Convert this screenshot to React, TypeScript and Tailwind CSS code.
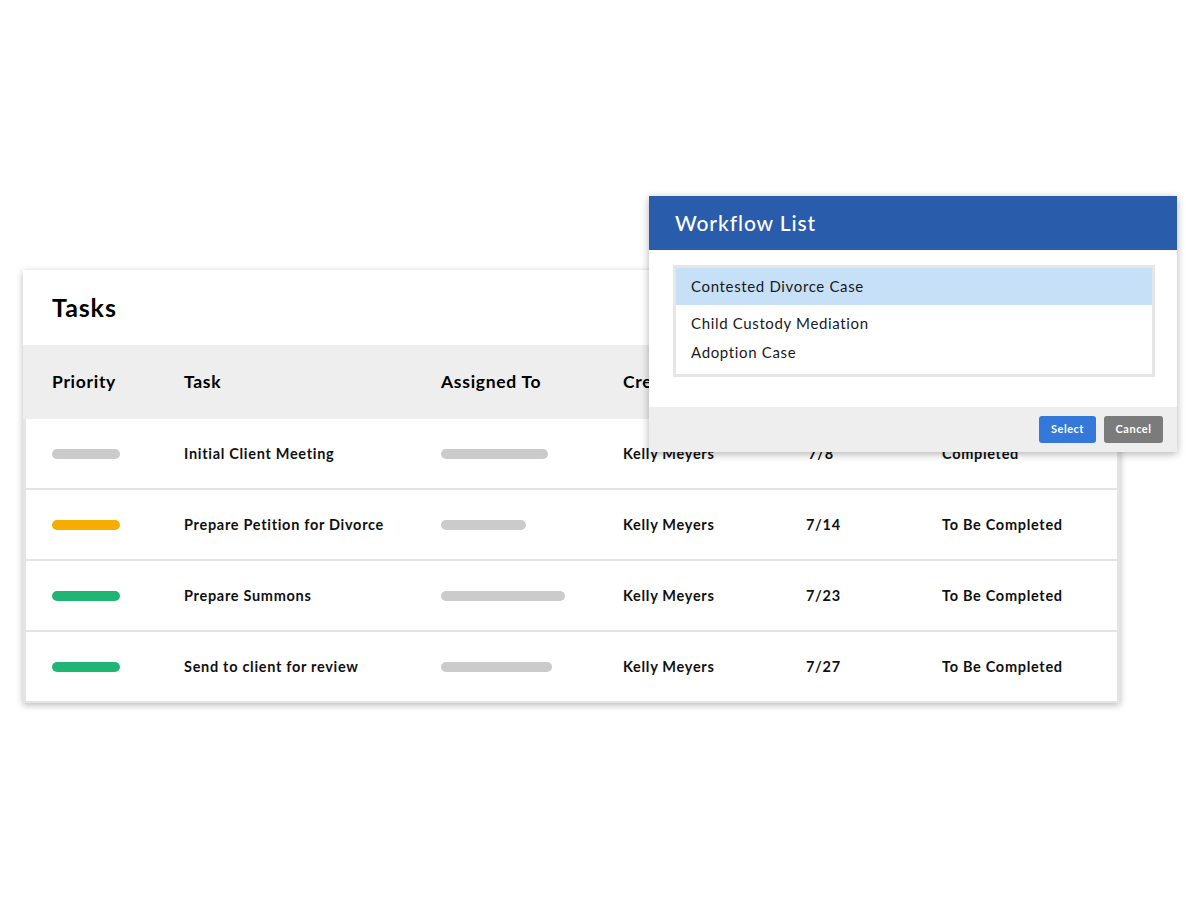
import React from "react";

const FONT = { fontFamily: "Lato, 'Noto Sans', Arial, sans-serif" };

interface Row { priority: string; task: string; bar: number; owner: string; date: string; status: string; }

const rows: Row[] = [
  { priority: "bg-[#cbcbcb]", task: "Initial Client Meeting", bar: 107, owner: "Kelly Meyers", date: "7/8", status: "Completed" },
  { priority: "bg-[#f7ad00]", task: "Prepare Petition for Divorce", bar: 85, owner: "Kelly Meyers", date: "7/14", status: "To Be Completed" },
  { priority: "bg-[#20b574]", task: "Prepare Summons", bar: 124, owner: "Kelly Meyers", date: "7/23", status: "To Be Completed" },
  { priority: "bg-[#20b574]", task: "Send to client for review", bar: 111, owner: "Kelly Meyers", date: "7/27", status: "To Be Completed" },
];

const cols = "grid grid-cols-[132px_257px_182px_183px_136px_1fr] items-center";

function TasksCard() {
  return (
    <div className="w-[1097px] bg-white shadow-[0_2px_7px_rgba(0,0,0,0.28)]">
      <div className="h-[75px] flex items-center pl-[29px]">
        <h1 className="text-[25px] font-bold text-black tracking-[0.9px]">Tasks</h1>
      </div>
      <div className={`${cols} h-[74px] bg-[#eeeeee] pl-[29px] text-[17.5px] font-bold text-black tracking-[0.7px]`}>
        <span>Priority</span>
        <span>Task</span>
        <span>Assigned To</span>
        <span>Created By</span>
        <span>Due</span>
        <span>Status</span>
      </div>
      <div className="bg-[#e4e4e4] px-[3px] pb-[2px] flex flex-col gap-[2px]">
        {rows.map(r => (
          <div key={r.task} className={`${cols} h-[69px] bg-white pl-[26px] text-[14.5px] font-bold text-[#111] tracking-[0.7px]`}>
            <span className={`block w-[68px] h-[10px] rounded-full ${r.priority}`} />
            <span>{r.task}</span>
            <span className="block h-[10px] rounded-full bg-[#cbcbcb]" style={{ width: r.bar }} />
            <span>{r.owner}</span>
            <span className="w-[30px] text-center">{r.date}</span>
            <span>{r.status}</span>
          </div>
        ))}
      </div>
    </div>
  );
}

function WorkflowModal() {
  const items = ["Contested Divorce Case", "Child Custody Mediation", "Adoption Case"];
  return (
    <div className="absolute left-[649px] top-[196px] w-[528px] bg-white shadow-[0_2px_8px_rgba(0,0,0,0.3)]">
      <div className="h-[54px] bg-[#295cab] flex items-center pl-[26px]">
        <h2 className="text-[21px] font-medium text-white tracking-[0.9px]">Workflow List</h2>
      </div>
      <div className="h-[157px] px-[24px] pt-[15px]">
        <div className="w-[482px] h-[112px] border-[3px] border-[#e6e6e6] bg-white text-[15px] text-[#1a1a1a] tracking-[0.65px]">
          <div className="h-[37px] bg-[#c6e0f7] flex items-center pl-[15px]">{items[0]}</div>
          <div className="pl-[15px] pt-[4px] leading-[29px]">
            <div>{items[1]}</div>
            <div>{items[2]}</div>
          </div>
        </div>
      </div>
      <div className="h-[45px] bg-[#eeeeee] flex items-center justify-end gap-[8px] pr-[14px]">
        <button className="w-[57px] h-[27px] rounded-[3px] bg-[#3479d9] text-white text-[11px] font-bold tracking-[0.5px]">Select</button>
        <button className="w-[59px] h-[27px] rounded-[3px] bg-[#7b7b7b] text-white text-[11px] font-bold tracking-[0.5px]">Cancel</button>
      </div>
    </div>
  );
}

export default function App() {
  return (
    <div className="relative w-[1200px] h-[900px] bg-white overflow-hidden" style={FONT}>
      <div className="pt-[270px] pl-[23px]">
        <TasksCard />
      </div>
      <WorkflowModal />
    </div>
  );
}
